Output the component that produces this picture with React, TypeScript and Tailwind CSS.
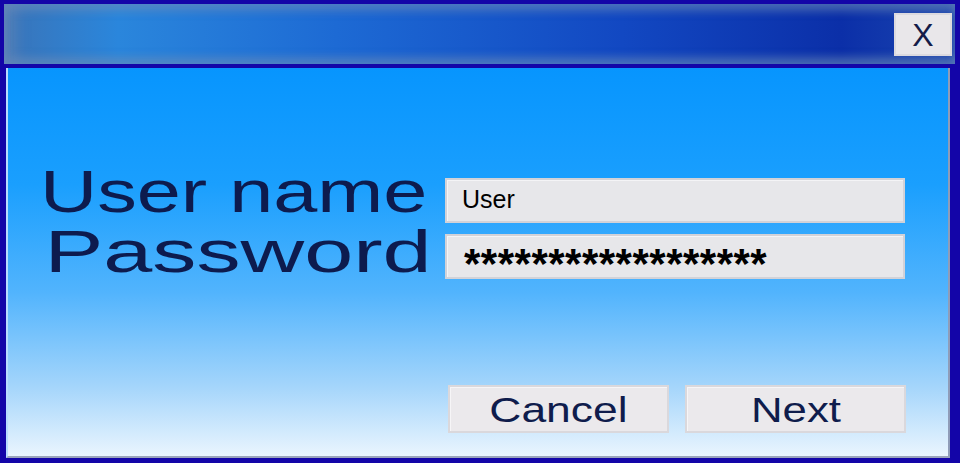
import React from 'react';

const font = { fontFamily: '"Liberation Sans", Arial, sans-serif' };

const Field: React.FC<{ children: React.ReactNode; pad: string }> = ({ children, pad }) => (
  <div className={`h-[45px] w-[460px] bg-[#e7e7ea] border-2 border-[#d2d2d8] shadow-[inset_1px_1px_0_#f4f4f6] pl-[15px] ${pad}`}>
    {children}
  </div>
);

const Button: React.FC<{ label: string; scale: string }> = ({ label, scale }) => (
  <div className="h-[48px] w-[221px] bg-[#ebe9ec] border-2 border-[#dad8dc] shadow-[inset_1px_1px_0_#f6f5f7] flex items-center justify-center">
    <span className={`inline-block text-[35px] leading-none text-[#0f1c4c] ${scale}`}>{label}</span>
  </div>
);

const App: React.FC = () => {
  return (
    <div style={font} className="w-[960px] h-[463px] bg-[#1305a8] pl-[4px] pr-[5px] pt-[4px] overflow-hidden">
      {/* title bar */}
      <div className="h-[60px] w-full flex items-start justify-end bg-[linear-gradient(to_right,#3a74b8_0%,#2a86dc_12%,#1d6ad4_35%,#1248c2_65%,#0b2fa8_88%,#1b45b0_100%)] shadow-[inset_0_7px_8px_rgba(110,140,185,0.45),inset_0_-7px_8px_rgba(110,140,185,0.45),inset_12px_0_14px_rgba(110,140,185,0.5)]">
        <div className="mt-[9px] mr-[3px] h-[43px] w-[58px] bg-[#e9e7ea] border-2 border-[#dcdadf] flex items-center justify-center">
          <span className="text-[32px] leading-none text-[#141c48]">X</span>
        </div>
      </div>

      {/* content panel */}
      <div className="mt-[4px] ml-[2px] mr-[5px] h-[390px] border-l-2 border-l-[#b8dcff] border-r-2 border-r-[#8f9cb8] border-b-2 border-b-[#9aa4bc] bg-[linear-gradient(to_bottom,#0795fe_0%,#1a9ffe_30%,#52b4fd_58%,#a4d5fb_82%,#eaf5fe_100%)]">
        <div className="flex pt-[94px]">
          <div className="w-[437px] pl-[32px] text-[60px] leading-none text-[#0d1b4e]">
            <div className="origin-left scale-x-[1.32] whitespace-nowrap">User name</div>
            <div className="origin-left scale-x-[1.47] whitespace-nowrap pl-[3px]">Password</div>
          </div>
          <div className="pt-[16px] flex flex-col gap-[11px]">
            <Field pad="pt-[7px]">
              <span className="block text-[25px] leading-none text-black">User</span>
            </Field>
            <Field pad="pt-[7px] pl-[17px]">
              <span className="block text-[42px] leading-none font-bold tracking-[0.5px] text-black whitespace-nowrap">
                ******************
              </span>
            </Field>
          </div>
        </div>
        <div className="mt-[103px] pl-[440px] flex gap-[16px]">
          <Button label="Cancel" scale="scale-x-[1.27]" />
          <Button label="Next" scale="scale-x-[1.25]" />
        </div>
      </div>
    </div>
  );
};

export default App;
